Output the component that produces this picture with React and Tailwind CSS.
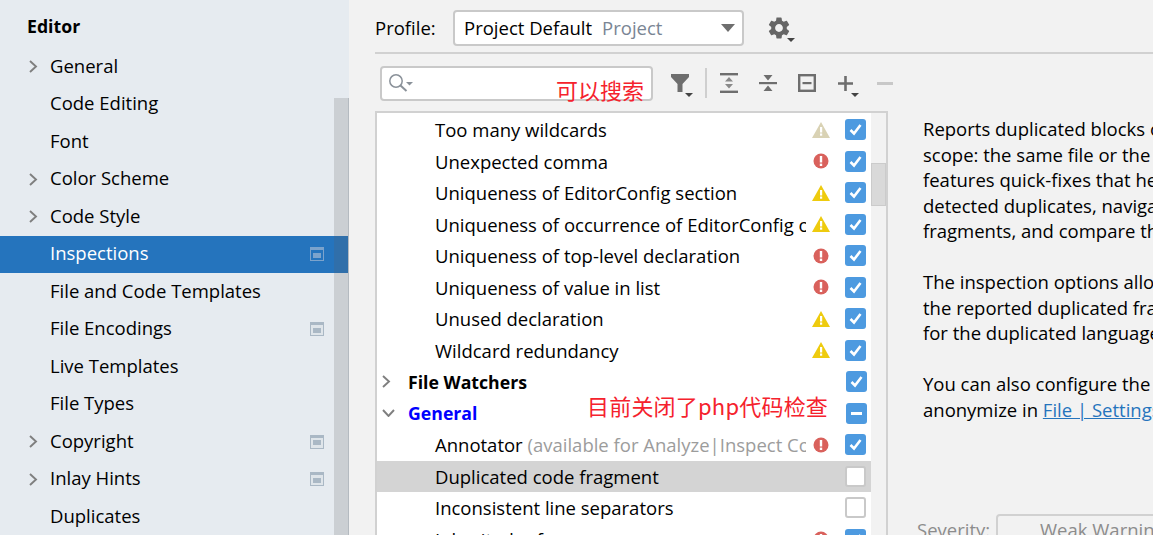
import { MdSettings } from "react-icons/md";

const font = { fontFamily: '"Open Sans", "Noto Sans", sans-serif' };

const sidebarItems = [
	{ label: "General", arrow: true },
	{ label: "Code Editing" },
	{ label: "Font" },
	{ label: "Color Scheme", arrow: true },
	{ label: "Code Style", arrow: true },
	{ label: "Inspections", badge: true, active: true },
	{ label: "File and Code Templates" },
	{ label: "File Encodings", badge: true },
	{ label: "Live Templates" },
	{ label: "File Types" },
	{ label: "Copyright", arrow: true, badge: true },
	{ label: "Inlay Hints", arrow: true, badge: true },
	{ label: "Duplicates" },
];

const treeRows = [
	{ label: "Too many wildcards", sev: "weak", check: "on" },
	{ label: "Unexpected comma", sev: "error", check: "on" },
	{ label: "Uniqueness of EditorConfig section", sev: "warn", check: "on" },
	{ label: "Uniqueness of occurrence of EditorConfig option", sev: "warn", check: "on" },
	{ label: "Uniqueness of top-level declaration", sev: "error", check: "on" },
	{ label: "Uniqueness of value in list", sev: "error", check: "on" },
	{ label: "Unused declaration", sev: "warn", check: "on" },
	{ label: "Wildcard redundancy", sev: "warn", check: "on" },
	{ label: "File Watchers", group: "right", check: "on" },
	{ label: "General", group: "down", check: "mixed" },
	{ label: "Annotator", hint: "(available for Analyze|Inspect Code)", sev: "error", check: "on" },
	{ label: "Duplicated code fragment", check: "off", selected: true },
	{ label: "Inconsistent line separators", check: "off" },
	{ label: "Inherited reference", sev: "error", check: "on" },
];

const description = [
	"Reports duplicated blocks of code from the selected",
	"scope: the same file or the entire project. The inspection",
	"features quick-fixes that help you to set the size of",
	"detected duplicates, navigate to repetitive code",
	"fragments, and compare them in a tool window.",
	"",
	"The inspection options allow you to select the scope of",
	"the reported duplicated fragments and set the initial size",
	"for the duplicated language constructs.",
	"",
	"You can also configure the constructs that you want to",
];

const ArrowRight = () => (
	<svg viewBox="0 0 9 13" className="h-[13px] w-[9px]" fill="none" aria-hidden="true">
		<path d="M1 1 7 6.5 1 12" stroke="#7f7f7f" strokeWidth="1.9" />
	</svg>
);

const ArrowDown = () => (
	<svg viewBox="0 0 13 8" className="h-[8px] w-[13px]" fill="none" aria-hidden="true">
		<path d="M1 1 6.5 7 12 1" stroke="#7f7f7f" strokeWidth="1.9" />
	</svg>
);

const Badge = ({ active }) => (
	<span
		className={`flex h-[14px] w-[14px] items-center justify-center border-x border-b border-t-[3px] ${
			active ? "border-[#7ba3cc] bg-[#2574bd]" : "border-[#aab8c5] bg-[#dfe5ea]"
		}`}
	>
		<span className={`h-[5px] w-[8px] ${active ? "bg-[#7ba3cc]" : "bg-[#aab8c5]"}`} />
	</span>
);

const WarnIcon = ({ color }) => (
	<svg viewBox="0 0 18 16" className="h-[16px] w-[18px] shrink-0" aria-hidden="true">
		<path d="M9 0 18 16H0Z" fill={color} />
		<rect x="8" y="5" width="2.2" height="5.5" fill="#fff" />
		<rect x="8" y="11.5" width="2.2" height="2.2" fill="#fff" />
	</svg>
);

const ErrorIcon = () => (
	<svg viewBox="0 0 16 16" className="h-[16px] w-[16px] shrink-0" aria-hidden="true">
		<circle cx="8" cy="8" r="7.5" fill="#d9615c" />
		<rect x="6.8" y="3" width="2.4" height="6.5" fill="#fff" />
		<rect x="6.8" y="10.6" width="2.4" height="2.4" fill="#fff" />
	</svg>
);

const Severity = ({ sev }) => {
	if (sev === "weak") return <WarnIcon color="#d9d2b4" />;
	if (sev === "warn") return <WarnIcon color="#eecb0e" />;
	if (sev === "error") return <ErrorIcon />;
	return null;
};

const Check = ({ state }) => {
	if (state === "off") {
		return <span className="h-[21px] w-[21px] rounded-[3px] border-2 border-[#c9c9c9] bg-white" />;
	}
	return (
		<span className="flex h-[21px] w-[21px] items-center justify-center rounded-[3px] bg-[#4d9ae0]">
			{state === "on" ? (
				<svg viewBox="0 0 21 21" className="h-[21px] w-[21px]" fill="none" aria-hidden="true">
					<path d="M5.5 11 9 14.5 15.5 6" stroke="#fff" strokeWidth="2.6" />
				</svg>
			) : (
				<span className="h-[3px] w-[11px] bg-white" />
			)}
		</span>
	);
};

const TreeRow = ({ row }) => (
	<div className={`flex h-[31.5px] items-center ${row.selected ? "bg-[#d4d4d4]" : ""}`}>
		{row.group ? (
			<div className="flex min-w-0 flex-1 items-center pl-[5px]">
				<span className="flex w-[26px] items-center">
					{row.group === "right" ? <ArrowRight /> : <ArrowDown />}
				</span>
				<span
					className={`pt-px text-[17.7px] font-bold ${row.group === "down" ? "text-[#0000ff]" : "text-black"}`}
				>
					{row.label}
				</span>
			</div>
		) : (
			<div className="w-[429px] min-w-0 shrink-0 overflow-hidden whitespace-nowrap pl-[58px] pt-px text-black">
				{row.label}
				{row.hint && <span className="text-[#9c9c9c]"> {row.hint}</span>}
			</div>
		)}
		{!row.group && (
			<span className="ml-[6px] flex w-[18px] shrink-0 justify-center">
				<Severity sev={row.sev} />
			</span>
		)}
		<span className={`flex shrink-0 ${row.group ? "ml-auto mr-[4px]" : "ml-[15px]"}`}>
			<Check state={row.check} />
		</span>
	</div>
);

const Caret = () => <path d="M0 0H8L4 4Z" fill="#444" />;

const FilterIcon = () => (
	<svg viewBox="0 0 24 28" className="h-[28px] w-[24px]" aria-hidden="true">
		<path d="M1 5H19V8L12.5 15V23H7.5V15L1 8Z" fill="#6e6e6e" />
		<g transform="translate(15 24)">
			<Caret />
		</g>
	</svg>
);

const ExpandIcon = () => (
	<svg viewBox="0 0 20 20" className="h-[20px] w-[20px]" aria-hidden="true">
		<rect x="1" y="0" width="18" height="2.4" fill="#6e6e6e" />
		<rect x="1" y="17.6" width="18" height="2.4" fill="#6e6e6e" />
		<path d="M10 4 14 8.5H6Z M10 15.5 14 11H6Z" fill="#8a8a8a" />
	</svg>
);

const CollapseIcon = () => (
	<svg viewBox="0 0 20 20" className="h-[20px] w-[20px]" aria-hidden="true">
		<rect x="1" y="9" width="18" height="2.2" fill="#6e6e6e" />
		<path d="M10 7.5 5.5 2H14.5Z M10 12.5 14.5 18H5.5Z" fill="#6e6e6e" />
	</svg>
);

const BoxMinusIcon = () => (
	<svg viewBox="0 0 20 20" className="h-[20px] w-[20px]" aria-hidden="true">
		<rect x="2.2" y="2.2" width="15.6" height="15.6" fill="none" stroke="#6e6e6e" strokeWidth="2.4" />
		<rect x="5.5" y="9" width="9" height="2.2" fill="#6e6e6e" />
	</svg>
);

const PlusIcon = () => (
	<svg viewBox="0 0 24 28" className="h-[28px] w-[24px]" aria-hidden="true">
		<path d="M7.2 7H9.8V13.2H16V15.8H9.8V22H7.2V15.8H1V13.2H7.2Z" fill="#6e6e6e" />
		<g transform="translate(14 24)">
			<Caret />
		</g>
	</svg>
);

const SearchIcon = () => (
	<svg viewBox="0 0 26 24" className="h-[24px] w-[26px]" fill="none" aria-hidden="true">
		<circle cx="7" cy="10" r="6.2" stroke="#8a9199" strokeWidth="1.5" />
		<path d="M11.5 14.5 17.5 20" stroke="#8a9199" strokeWidth="2" />
		<path d="M17 11H24L20.5 14.5Z" fill="#8a9199" />
	</svg>
);

export default function App() {
	return (
		<div
			style={font}
			className="relative flex h-[535px] w-[1153px] overflow-hidden bg-[#f2f2f2] text-[18.5px] text-black"
		>
			<aside className="relative w-[349px] shrink-0 overflow-hidden bg-[#e6ebf0]">
				<div className="flex h-[48px] items-center pb-px pl-[27px] pt-[6px] text-[17.7px] font-bold">Editor</div>
				{sidebarItems.map((item) => (
					<div
						key={item.label}
						className={`flex h-[37.5px] items-center pl-[29px] pr-[25px] ${
							item.active ? "bg-[#2574bd] text-white" : ""
						}`}
					>
						<span className="flex w-[21px] items-center">{item.arrow && <ArrowRight />}</span>
						<span className="flex-1 pb-[2px]">{item.label}</span>
						{item.badge && <Badge active={item.active} />}
					</div>
				))}
				<div className="absolute bottom-0 right-0 top-[98px] w-[15px] border-r border-[#b4bac0] bg-[#5f5f5f]/20" />
			</aside>

			<main className="min-w-0 flex-1 pl-[26px]">
				<div className="flex h-[54px] items-center border-b-2 border-[#d1d1d1] pt-[3px]">
					<span className="w-[78px]">Profile:</span>
					<div className="flex h-[36px] w-[291px] items-center rounded-[4px] border-2 border-[#c9c9c9] bg-white pl-[9px] pr-[7px]">
						<span>Project Default</span>
						<span className="ml-[10px] text-[#7a8594]">Project</span>
						<svg viewBox="0 0 14 8" className="ml-auto h-[8px] w-[14px]" aria-hidden="true">
							<path d="M0 0H14L7 8Z" fill="#6e6e6e" />
						</svg>
					</div>
					<span className="relative ml-[22px] flex">
						<MdSettings size={26} className="text-[#666]" />
						<svg viewBox="0 0 8 4" className="absolute bottom-[-1px] right-[-3px] h-[4px] w-[8px]" aria-hidden="true">
							<Caret />
						</svg>
					</span>
				</div>

				<div className="flex h-[57px] items-center pl-[5px] pt-px">
					<div className="flex h-[35px] w-[273px] items-center rounded-[4px] border-2 border-[#c9c9c9] bg-white pl-[7px]">
						<SearchIcon />
					</div>
					<span className="ml-[17px] flex">
						<FilterIcon />
					</span>
					<span className="ml-[11px] h-[30px] w-[2px] bg-[#cfcfcf]" />
					<span className="ml-[12px] flex">
						<ExpandIcon />
					</span>
					<span className="ml-[19px] flex">
						<CollapseIcon />
					</span>
					<span className="ml-[19px] flex">
						<BoxMinusIcon />
					</span>
					<span className="ml-[20px] flex">
						<PlusIcon />
					</span>
					<svg viewBox="0 0 16 3" className="ml-[16px] h-[3px] w-[16px]" aria-hidden="true">
						<rect width="16" height="3" fill="#c8c8c8" />
					</svg>
				</div>

				<div className="flex">
					<div className="relative h-[424px] w-[513px] shrink-0 overflow-hidden border-x-2 border-t-2 border-[#d1d1d1]">
						<div className="w-[494px] bg-white pt-px">
							{treeRows.map((row) => (
								<TreeRow key={row.label} row={row} />
							))}
						</div>
						<div className="absolute right-0 top-[50px] h-[43px] w-[15px] border border-[#cbcbcb] bg-[#d9d9d9]" />
					</div>
					<div className="min-w-0 flex-1 overflow-hidden whitespace-nowrap pl-[35px] pt-[5px] leading-[25.5px]">
						{description.map((line, i) => (
							<div key={i} className="h-[25.5px]">
								{line}
							</div>
						))}
						<div className="h-[25.5px]">
							anonymize in <span className="text-[#2574bd] underline">File | Settings</span>
						</div>
						<div className="mt-[92px] flex h-[40px] items-start text-[#8c8c8c]">
							<span className="-ml-[6px] mt-[3px] w-[79px] shrink-0">Severity:</span>
							<div className="h-[40px] flex-1 rounded-[4px] border-2 border-[#d1d1d1] bg-[#f2f2f2] pl-[42px] pt-px">
								Weak Warning
							</div>
						</div>
					</div>
				</div>
			</main>

			<span
				style={{ fontFamily: '"Noto Sans CJK SC", sans-serif' }}
				className="absolute left-[556px] top-[73px] text-[22px] leading-[32px] text-[#f5222d]"
			>
				可以搜索
			</span>
			<span
				style={{ fontFamily: '"Noto Sans CJK SC", sans-serif' }}
				className="absolute left-[587px] top-[389px] text-[22px] leading-[32px] tracking-[0.2px] text-[#f5222d]"
			>
				目前关闭了php代码检查
			</span>
		</div>
	);
}
